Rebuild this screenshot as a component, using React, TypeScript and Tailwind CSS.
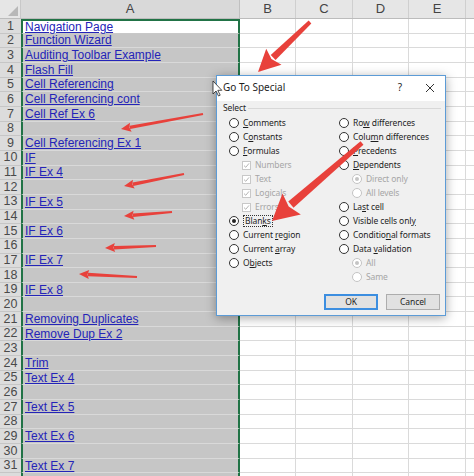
import React from "react";

const cells: string[] = [
  "Navigation Page",
  "Function Wizard",
  "Auditing Toolbar Example",
  "Flash Fill",
  "Cell Referencing",
  "Cell Referencing cont",
  "Cell Ref Ex 6",
  "",
  "Cell Referencing Ex 1",
  "IF",
  "IF Ex 4",
  "",
  "IF Ex 5",
  "",
  "IF Ex 6",
  "",
  "IF Ex 7",
  "",
  "IF Ex 8",
  "",
  "Removing Duplicates",
  "Remove Dup Ex 2",
  "",
  "Trim",
  "Text Ex 4",
  "",
  "Text Ex 5",
  "",
  "Text Ex 6",
  "",
  "Text Ex 7",
  "",
];

const cols = ["B", "C", "D", "E"];
const colW = ["w-[56px]", "w-[57px]", "w-[56px]", "w-[57px]"];

type Pt = [number, number];

function Arrow({ from, to, w, head, hw }: { from: Pt; to: Pt; w: number; head: number; hw: number }) {
  const dx = to[0] - from[0];
  const dy = to[1] - from[1];
  const len = Math.hypot(dx, dy);
  const ux = dx / len;
  const uy = dy / len;
  const px = -uy;
  const py = ux;
  const bx = to[0] - ux * (head - 1);
  const by = to[1] - uy * (head - 1);
  const tw = w * 0.55;
  const shaft = [
    [from[0] + (px * tw) / 2, from[1] + (py * tw) / 2],
    [bx + (px * w) / 2, by + (py * w) / 2],
    [bx - (px * w) / 2, by - (py * w) / 2],
    [from[0] - (px * tw) / 2, from[1] - (py * tw) / 2],
  ];
  const hb = [to[0] - ux * head, to[1] - uy * head];
  const tip = [
    [to[0], to[1]],
    [hb[0] + (px * hw) / 2, hb[1] + (py * hw) / 2],
    [hb[0] + ux * head * 0.15, hb[1] + uy * head * 0.15],
    [hb[0] - (px * hw) / 2, hb[1] - (py * hw) / 2],
  ];
  const s = (a: number[][]) => a.map((p) => p.join(",")).join(" ");
  return (
    <g fill="#e8413b">
      <polygon points={s(shaft)} />
      <polygon points={s(tip)} />
    </g>
  );
}

function Radio({ checked, disabled }: { checked?: boolean; disabled?: boolean }) {
  return (
    <span
      className={`flex h-[10px] w-[10px] shrink-0 items-center justify-center rounded-full border bg-white ${
        disabled ? "border-[#c4c4c4]" : "border-[#333]"
      }`}
    >
      {checked && (
        <span className={`h-[4px] w-[4px] rounded-full ${disabled ? "bg-[#c4c4c4]" : "bg-[#222]"}`} />
      )}
    </span>
  );
}

function Check() {
  return (
    <span className="flex h-[9px] w-[9px] shrink-0 items-center justify-center border border-[#c8c8c8] bg-white">
      <svg width="7" height="7" viewBox="0 0 7 7">
        <path d="M1 3.6 L2.8 5.3 L6 1.4" fill="none" stroke="#b5b5b5" strokeWidth="1" />
      </svg>
    </span>
  );
}

function Label({ text, u, disabled }: { text: string; u?: number; disabled?: boolean }) {
  const color = disabled ? "text-[#a6a6a6]" : "text-[#1e1e1e]";
  if (u === undefined) return <span className={color}>{text}</span>;
  return (
    <span className={color}>
      {text.slice(0, u)}
      <span className="underline">{text[u]}</span>
      {text.slice(u + 1)}
    </span>
  );
}

type Opt = { text: string; u?: number; kind: "radio" | "check" | "sub"; checked?: boolean; disabled?: boolean; focus?: boolean };

const leftOpts: Opt[] = [
  { text: "Comments", u: 0, kind: "radio" },
  { text: "Constants", u: 1, kind: "radio" },
  { text: "Formulas", u: 0, kind: "radio" },
  { text: "Numbers", kind: "check", disabled: true },
  { text: "Text", kind: "check", disabled: true },
  { text: "Logicals", kind: "check", disabled: true },
  { text: "Errors", kind: "check", disabled: true },
  { text: "Blanks", u: 4, kind: "radio", checked: true, focus: true },
  { text: "Current region", u: 8, kind: "radio" },
  { text: "Current array", u: 8, kind: "radio" },
  { text: "Objects", u: 1, kind: "radio" },
];

const rightOpts: Opt[] = [
  { text: "Row differences", u: 2, kind: "radio" },
  { text: "Column differences", u: 4, kind: "radio" },
  { text: "Precedents", u: 0, kind: "radio" },
  { text: "Dependents", u: 0, kind: "radio" },
  { text: "Direct only", kind: "sub", checked: true, disabled: true },
  { text: "All levels", kind: "sub", disabled: true },
  { text: "Last cell", u: 2, kind: "radio" },
  { text: "Visible cells only", u: 17, kind: "radio" },
  { text: "Conditional formats", u: 8, kind: "radio" },
  { text: "Data validation", u: 5, kind: "radio" },
  { text: "All", kind: "sub", checked: true, disabled: true },
  { text: "Same", kind: "sub", disabled: true },
];

function OptRow({ o }: { o: Opt }) {
  const indent = o.kind === "check" ? "pl-[13px]" : o.kind === "sub" ? "pl-[13px]" : "";
  return (
    <div className={`flex h-[14px] items-center gap-[4px] ${indent}`}>
      {o.kind === "check" ? <Check /> : <Radio checked={o.checked} disabled={o.disabled} />}
      <span className={o.focus ? "border border-dotted border-[#333] px-[1px] leading-[10px]" : ""}>
        <Label text={o.text} u={o.u} disabled={o.disabled} />
      </span>
    </div>
  );
}

function Dialog() {
  return (
    <div className="absolute left-[216px] top-[75px] flex h-[241px] w-[230px] flex-col border border-[#5c9bd6] bg-[#f0f0f0] font-['Noto_Sans',sans-serif] text-[8.5px] tracking-[-0.1px] shadow-[0_2px_10px_rgba(0,0,0,0.35)]">
      <div className="flex h-[25px] items-center justify-between bg-white pb-[2px] pl-[6px] pr-[10px] text-[10px] tracking-normal text-[#1e1e1e]">
        <span>Go To Special</span>
        <div className="flex items-center gap-[23px]">
          <span className="text-[10px]">?</span>
          <svg width="10" height="10" viewBox="0 0 10 10">
            <path d="M1 1 L9 9 M9 1 L1 9" stroke="#333" strokeWidth="1" />
          </svg>
        </div>
      </div>
      <div className="flex flex-1 flex-col pl-[6px] pr-[4px] pt-[1px]">
        <div className="flex h-[12px] items-center gap-[2px]">
          <span className="text-[#1e1e1e]">Select</span>
          <span className="h-px flex-1 bg-[#d8d8d8]" />
        </div>
        <div className="mt-[2px] flex pl-[6px]">
          <div className="flex w-[110px] flex-col">
            {leftOpts.map((o) => (
              <OptRow key={o.text} o={o} />
            ))}
          </div>
          <div className="flex flex-col">
            {rightOpts.map((o) => (
              <OptRow key={o.text} o={o} />
            ))}
          </div>
        </div>
        <div className="mt-[10px] flex justify-end gap-[8px] pr-[1px]">
          <button className="flex h-[16px] w-[54px] items-center justify-center border-2 border-[#3c8ee0] bg-[#e1e1e1] text-[#1e1e1e]">
            OK
          </button>
          <button className="flex h-[16px] w-[54px] items-center justify-center border border-[#adadad] bg-[#e1e1e1] text-[#1e1e1e]">
            Cancel
          </button>
        </div>
      </div>
    </div>
  );
}

export default function App() {
  return (
    <div className="relative h-[476px] w-[474px] overflow-hidden bg-white font-['Liberation_Sans',Arial,sans-serif]">
      <div className="flex h-[19px] border-b border-[#bcbcbc] bg-[#e6e6e6] text-[13px] text-[#444]">
        <div className="relative w-[21px] border-r border-[#c8c8c8]">
          <svg className="absolute bottom-[2px] right-[2px]" width="10" height="10" viewBox="0 0 10 10">
            <polygon points="10,0 10,10 0,10" fill="#b8b8b8" />
          </svg>
        </div>
        <div className="flex w-[219px] items-center justify-center border-r border-[#c0c0c0] bg-[#d9d9d9]">A</div>
        {cols.map((c, i) => (
          <div key={c} className={`flex ${colW[i]} items-center justify-center border-r border-[#cfcfcf]`}>
            {c}
          </div>
        ))}
        <div className="flex-1" />
      </div>
      {cells.map((t, i) => (
        <div key={i} className="flex h-[14.67px]">
          <div className="flex w-[21px] items-center justify-center border-b border-[#c6c6c6] bg-[#dcdcdc] text-[12.5px] leading-none text-[#4a4a4a]">
            {i < 31 ? i + 1 : ""}
          </div>
          <div
            className={`flex w-[219px] items-center border-x-2 border-b border-x-[#217346] pl-[2px] text-[12px] leading-none ${
              i === 0 ? "border-t-2 border-t-[#217346] border-b-[#c8c8c8] bg-white" : "border-b-[#d9d9d9] bg-[#c6c6c6]"
            }`}
          >
            {t && <span className="text-[#2424b8] underline decoration-[#2424b8]">{t}</span>}
          </div>
          {cols.map((c, j) => (
            <div key={c} className={`${colW[j]} border-b border-r border-[#dadada]`} />
          ))}
          <div className="flex-1 border-b border-[#dadada]" />
        </div>
      ))}
      <Dialog />
      <svg className="absolute left-0 top-0" width="474" height="476" viewBox="0 0 474 476">
        <Arrow from={[310, 22]} to={[258, 72]} w={7} head={22} hw={22} />
        <Arrow from={[362, 143]} to={[272, 221]} w={8} head={26} hw={28} />
        <Arrow from={[203, 114]} to={[121, 129]} w={3.5} head={10} hw={9} />
        <Arrow from={[184, 174]} to={[124, 186]} w={3.5} head={10} hw={9} />
        <Arrow from={[172, 212]} to={[124, 216]} w={3.5} head={10} hw={9} />
        <Arrow from={[156, 246]} to={[105, 248]} w={3.5} head={10} hw={9} />
        <Arrow from={[137, 277]} to={[79, 274]} w={3.5} head={10} hw={9} />
        <path
          d="M213 81 L213 94 L216 91 L218.5 96 L220.2 95.2 L217.8 90.3 L221.8 90.3 Z"
          fill="white"
          stroke="#222"
          strokeWidth="0.8"
          strokeLinejoin="round"
        />
      </svg>
    </div>
  );
}
